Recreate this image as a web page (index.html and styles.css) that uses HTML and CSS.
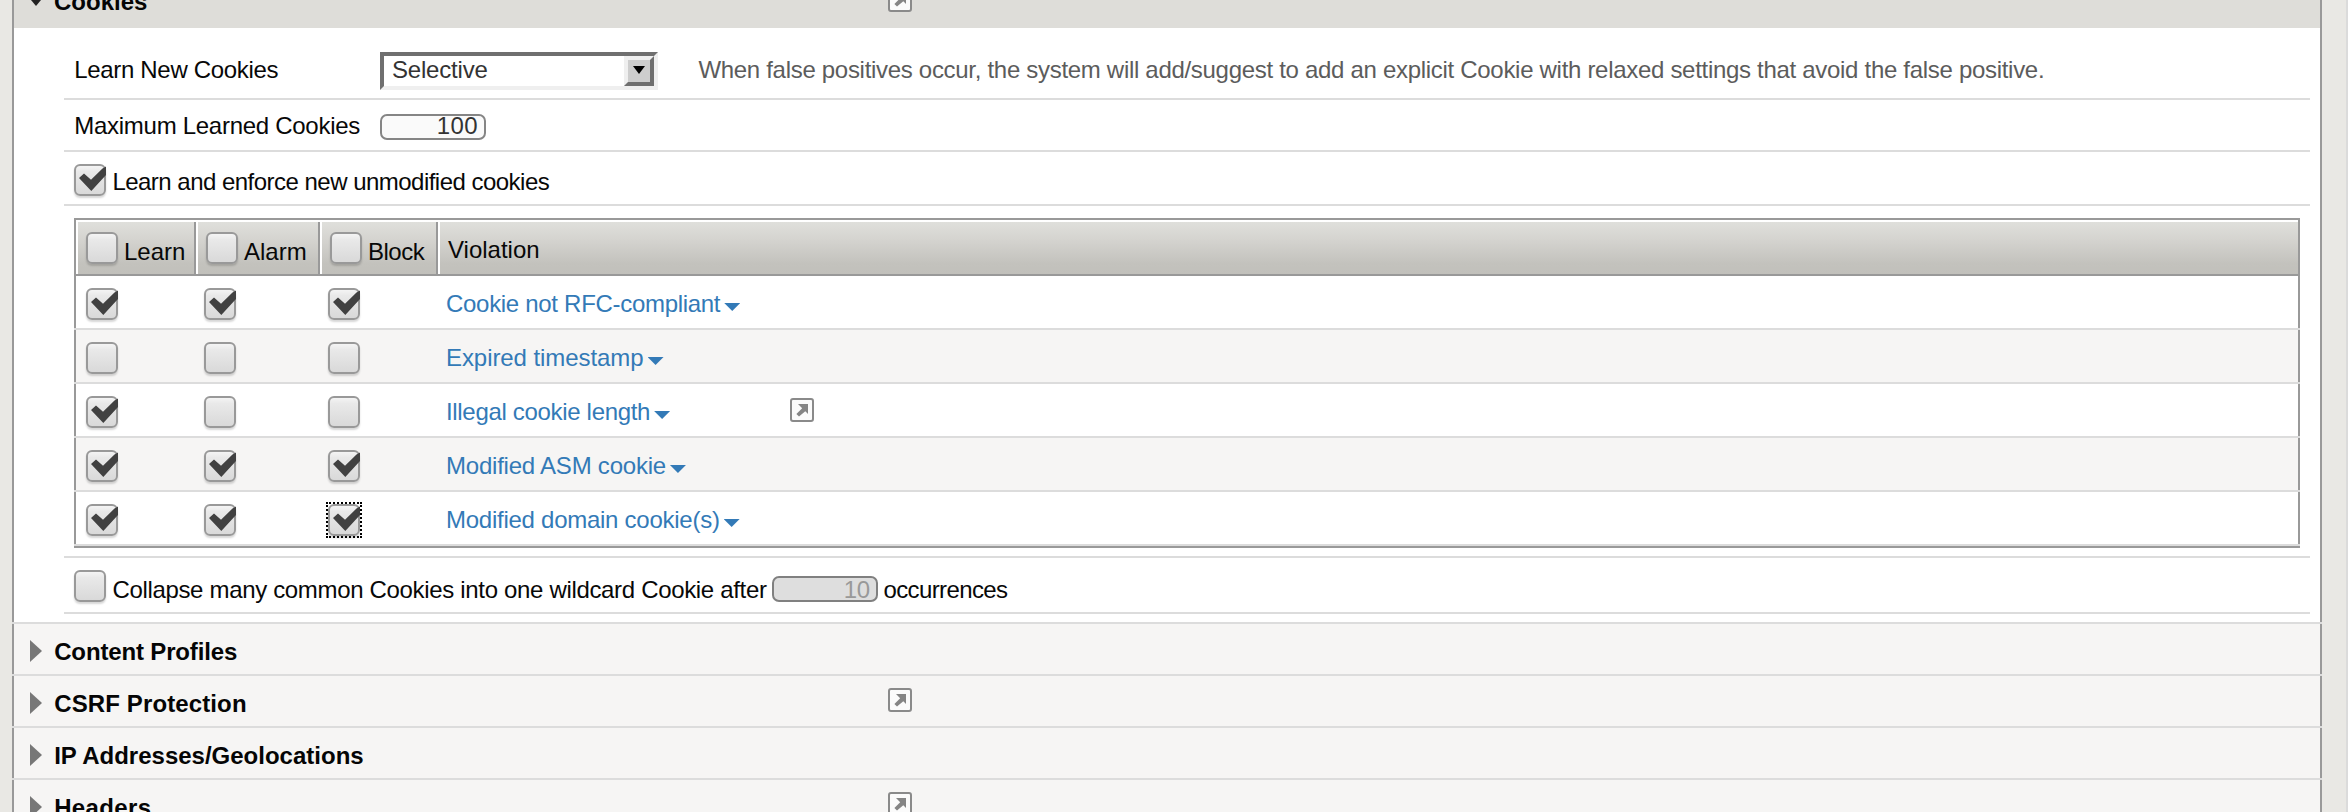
FILE: index.html
```
<!DOCTYPE html>
<html lang="en">
<head>
<meta charset="utf-8">
<title>Learning and Blocking Settings</title>
<link rel="stylesheet" href="styles.css">
</head>
<body>
<svg class="defs" width="0" height="0">
  <symbol id="ext" viewBox="0 0 24 24">
    <rect x="1" y="1" width="22" height="22" rx="2" fill="#fbfbfb" stroke="#8a8a8a" stroke-width="2"/>
    <path d="M8 6H18V16L15.3 13.3L9 18.6L6.4 16L12.2 10.2Z" fill="#858585"/>
  </symbol>
  <symbol id="tick" viewBox="0 0 32 32">
    <path d="M5 14L10 9.5L17 15.8L28.5 4.4L32 2.5V11L17.3 27Z" fill="#414141"/>
  </symbol>
</svg>
<div class="page">
  <main class="panel">
    <header class="open-head">
      <svg class="tri-down" viewBox="0 0 20 12"><path d="M0 0H20L10 12Z" fill="#222"/></svg>
      <span class="title t-cookies">Cookies</span>
      <svg class="ext"><use href="#ext"/></svg>
    </header>
    <div class="settings">
      <div class="row row-mode">
        <span class="label l-new">Learn New Cookies</span>
        <div class="select"><span class="select-text">Selective</span><span class="select-btn"><i></i></span></div>
        <span class="hint">When false positives occur, the system will add/suggest to add an explicit Cookie with relaxed settings that avoid the false positive.</span>
      </div>
      <div class="row row-max">
        <span class="label l-max">Maximum Learned Cookies</span>
        <span class="num">100</span>
      </div>
      <div class="row row-enforce">
        <span class="cb"><svg><use href="#tick"/></svg></span>
        <span class="cb-label l-enforce">Learn and enforce new unmodified cookies</span>
      </div>
      <div class="row row-table">
        <div class="table">
          <div class="thead">
            <div class="th"><span class="cb"></span><span class="h-learn">Learn</span></div>
            <div class="th"><span class="cb"></span><span class="h-alarm">Alarm</span></div>
            <div class="th"><span class="cb"></span><span class="h-block">Block</span></div>
            <div class="th th-last"><span class="h-viol">Violation</span></div>
          </div>
          <div class="tr"><div class="cells">
            <span class="cb"><svg><use href="#tick"/></svg></span>
            <span class="cb"><svg><use href="#tick"/></svg></span>
            <span class="cb"><svg><use href="#tick"/></svg></span>
            <a class="viol v1">Cookie not RFC-compliant<i class="caret"></i></a>
          </div></div>
          <div class="tr alt"><div class="cells">
            <span class="cb"></span><span class="cb"></span><span class="cb"></span>
            <a class="viol v2">Expired timestamp<i class="caret"></i></a>
          </div></div>
          <div class="tr"><div class="cells">
            <span class="cb"><svg><use href="#tick"/></svg></span>
            <span class="cb"></span><span class="cb"></span>
            <a class="viol v3">Illegal cookie length<i class="caret"></i></a>
            <svg class="ext"><use href="#ext"/></svg>
          </div></div>
          <div class="tr alt"><div class="cells">
            <span class="cb"><svg><use href="#tick"/></svg></span>
            <span class="cb"><svg><use href="#tick"/></svg></span>
            <span class="cb"><svg><use href="#tick"/></svg></span>
            <a class="viol v4">Modified ASM cookie<i class="caret"></i></a>
          </div></div>
          <div class="tr"><div class="cells">
            <span class="cb"><svg><use href="#tick"/></svg></span>
            <span class="cb"><svg><use href="#tick"/></svg></span>
            <span class="cb focus"><svg><use href="#tick"/></svg></span>
            <a class="viol v5">Modified domain cookie(s)<i class="caret"></i></a>
          </div></div>
        </div>
      </div>
      <div class="row row-collapse">
        <span class="cb"></span>
        <span class="cb-label l-collapse">Collapse many common Cookies into one wildcard Cookie after</span>
        <span class="num disabled">10</span>
        <span class="l-occ">occurrences</span>
      </div>
    </div>
    <div class="sections">
      <div class="section"><div class="inner">
        <svg class="tri" viewBox="0 0 12 22"><path d="M0 0L12 11L0 22Z" fill="#777"/></svg>
        <span class="title t-content">Content Profiles</span>
      </div></div>
      <div class="section"><div class="inner">
        <svg class="tri" viewBox="0 0 12 22"><path d="M0 0L12 11L0 22Z" fill="#777"/></svg>
        <span class="title t-csrf">CSRF Protection</span>
        <svg class="ext"><use href="#ext"/></svg>
      </div></div>
      <div class="section"><div class="inner">
        <svg class="tri" viewBox="0 0 12 22"><path d="M0 0L12 11L0 22Z" fill="#777"/></svg>
        <span class="title t-ip">IP Addresses/Geolocations</span>
      </div></div>
      <div class="section"><div class="inner">
        <svg class="tri" viewBox="0 0 12 22"><path d="M0 0L12 11L0 22Z" fill="#777"/></svg>
        <span class="title t-headers">Headers</span>
        <svg class="ext"><use href="#ext"/></svg>
      </div></div>
    </div>
  </main>
</div>
</body>
</html>
```
FILE: styles.css
```
* { box-sizing: border-box; }
html, body { margin: 0; height: 812px; overflow: hidden; }
body {
  font: 24px/27px "Liberation Sans", Arial, sans-serif;
  color: #080808;
  white-space: nowrap;
}
svg { display: block; flex: none; }
.defs { display: none; }

.page {
  height: 812px;
  padding: 0 24px 0 12px;
  background: #e9e8e4;
  border-right: 2px solid #dbdbdb;
  overflow: hidden;
}
.panel {
  height: 860px;
  background: #fff;
  border: solid #999;
  border-width: 0 2px;
}

/* expanded section heading */
.open-head {
  display: grid;
  grid-template-columns: 28px 834px 24px;
  height: 28px;
  padding-left: 12px;
  background: #deddd9;
  overflow: hidden;
}
.open-head .title, .open-head .ext { margin-top: -12px; }
.tri-down { width: 20px; height: 12px; margin-top: -6px; }
.title { font-weight: bold; color: #050505; }
.ext { width: 24px; height: 24px; }

/* settings rows */
.settings { height: 594px; padding: 0 10px 0 50px; }
.row {
  display: flex;
  align-items: flex-start;
  padding-left: 10px;
  border-bottom: 2px solid #dcdcdc;
}
.label { width: 306px; text-indent: 0.3px; }
.row-mode { height: 72px; padding-top: 28px; }
.row-max { height: 52px; padding-top: 12px; }
.row-enforce { height: 54px; padding-top: 12px; }
.row-table { height: 352px; padding: 12px 10px 0; }
.row-collapse { height: 56px; padding-top: 12px; }

.select {
  display: flex;
  justify-content: space-between;
  width: 278px;
  height: 38px;
  margin-top: -4px;
  border: 4px solid;
  border-color: #6f6f6f #efefef #efefef #6f6f6f;
  background: #fff;
}
.select-text { margin-left: 8px; color: #333; letter-spacing: -0.2px; }
.select-btn {
  display: flex;
  justify-content: center;
  width: 30px;
  height: 30px;
  border: 4px solid;
  border-color: #efefef #6f6f6f #6f6f6f #efefef;
  background: #cdcdcd;
}
.select-btn i {
  width: 12px;
  height: 8px;
  margin-top: 6px;
  background: #000;
  clip-path: polygon(0 0, 100% 0, 50% 100%);
}
.hint { margin-left: 40.4px; color: #5c5c5c; letter-spacing: -0.3px; }

.num {
  width: 106px;
  height: 26px;
  margin-top: 2px;
  padding-right: 6px;
  border: 2px solid #858585;
  border-radius: 7px;
  background: #fafafa;
  color: #333;
  line-height: 19px;
  text-align: right;
  letter-spacing: 0.4px;
}
.num.disabled {
  margin: 6px 5.5px 0 0;
  line-height: 23px;
  background: #dedede;
  border-color: #808080;
  color: #999;
  letter-spacing: -0.2px;
}

.cb {
  flex: none;
  width: 32px;
  height: 32px;
  border: 2px solid #999;
  border-radius: 6px;
  background: linear-gradient(#f4f4f4, #e9e9e9 20%, #d9d9d9);
  box-shadow: 0 2px 2px rgba(0, 0, 0, 0.16);
}
.cb svg { width: 32px; height: 32px; margin: -2px; }
.cb.focus { position: relative; }
.cb.focus::after {
  content: "";
  position: absolute;
  inset: -4px;
  border: 2px dotted #000;
}
.cb-label { margin-left: 6.4px; }
.row-enforce .cb-label { margin-top: 4px; }
.row-collapse .cb-label { width: 659.6px; margin-top: 6px; }
.l-occ { margin-top: 6px; letter-spacing: -0.62px; }

/* violations table */
.table {
  width: 100%;
  height: 330px;
  border: solid #999;
  border-width: 2px 0;
}
.thead {
  display: grid;
  grid-template-columns: 120px 124px 118px 1fr;
  height: 56px;
  border: 2px solid #999;
  border-top: 0;
}
.th {
  display: flex;
  align-items: flex-start;
  gap: 6px;
  padding: 10px 0 0 8px;
  border: solid #fff;
  border-width: 2px 0 0 2px;
  background: linear-gradient(#dfdfdb, #d6d5d1 30%, #c3c2bd 80%, #c1c0bb);
  box-shadow: inset -2px 0 #999;
}
.th span:last-child { margin-top: 6px; }
.th-last { padding-left: 8px; box-shadow: none; }
.th-last span:last-child { margin-top: 4px; }
.tr { border-bottom: 2px solid #dcdcdc; }
.alt { background: #f6f5f4; }
.cells {
  display: grid;
  grid-template-columns: 118px 124px 118px 344px 24px;
  align-items: start;
  height: 52px;
  padding: 12px 0 0 10px;
  border: solid #999;
  border-width: 0 2px;
}
.viol { margin-top: 2px; color: #337ab7; display: flex; }
.cells .ext { margin-top: 2px; }
.caret {
  width: 16px;
  height: 8px;
  margin: 13px 0 0 4px;
  background: #337ab7;
  clip-path: polygon(0 0, 100% 0, 50% 100%);
}

/* collapsed sections */
.sections { margin: 0 -2px; }
.section { border-top: 2px solid #dcdcdc; }
.inner {
  display: grid;
  grid-template-columns: 24.2px 833.8px 24px;
  height: 50px;
  padding-left: 16px;
  background: #f6f5f4;
  border: solid #999;
  border-width: 0 2px;
}
.inner .tri { width: 12px; height: 22px; margin-top: 16px; }
.inner .title { margin-top: 14px; }
.inner .ext { margin-top: 12px; }

/* tracking per label */
.l-new { letter-spacing: -0.33px; }
.l-max { letter-spacing: -0.28px; }
.l-enforce { letter-spacing: -0.52px; }
.l-collapse { letter-spacing: -0.33px; }
.h-block { letter-spacing: -0.5px; }
.v1 { letter-spacing: -0.3px; }
.v2 { letter-spacing: -0.07px; }
.v3 { letter-spacing: -0.32px; }
.v4 { letter-spacing: -0.22px; }
.v5 { letter-spacing: -0.26px; }
.t-content { letter-spacing: -0.15px; }
.t-csrf { letter-spacing: 0.12px; }
.t-headers { letter-spacing: 0.35px; }
```
